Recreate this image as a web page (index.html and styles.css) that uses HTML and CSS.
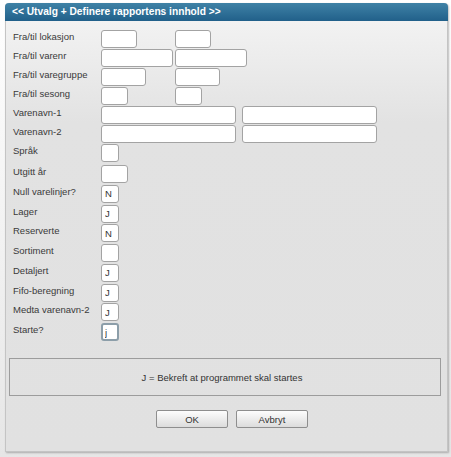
FILE: index.html
```html
<!DOCTYPE html>
<html>
<head>
<meta charset="utf-8">
<link rel="stylesheet" href="styles.css">
</head>
<body>
<div class="dialog">
  <div class="titlebar">&lt;&lt; Utvalg + Definere rapportens innhold &gt;&gt;</div>
  <div class="content">
    <div class="fields top">
      <div class="row"><span class="lbl">Fra/til lokasjon</span><div class="pair"><input class="inp w36"><input class="inp w36"></div></div>
      <div class="row"><span class="lbl">Fra/til varenr</span><div class="pair"><input class="inp w72"><input class="inp w72"></div></div>
      <div class="row"><span class="lbl">Fra/til varegruppe</span><div class="pair"><input class="inp w45"><input class="inp w45"></div></div>
      <div class="row"><span class="lbl">Fra/til sesong</span><div class="pair"><input class="inp w27"><input class="inp w27"></div></div>
      <div class="row"><span class="lbl">Varenavn-1</span><div class="pair wide"><input class="inp w135"><input class="inp w135"></div></div>
      <div class="row"><span class="lbl">Varenavn-2</span><div class="pair wide"><input class="inp w135"><input class="inp w135"></div></div>
      <div class="row"><span class="lbl">Språk</span><input class="inp w18"></div>
    </div>
    <div class="fields bottom">
      <div class="row"><span class="lbl">Utgitt år</span><input class="inp w27"></div>
      <div class="row"><span class="lbl">Null varelinjer?</span><input class="inp w18" value="N"></div>
      <div class="row"><span class="lbl">Lager</span><input class="inp w18" value="J"></div>
      <div class="row"><span class="lbl">Reserverte</span><input class="inp w18" value="N"></div>
      <div class="row"><span class="lbl">Sortiment</span><input class="inp w18"></div>
      <div class="row"><span class="lbl">Detaljert</span><input class="inp w18" value="J"></div>
      <div class="row"><span class="lbl">Fifo-beregning</span><input class="inp w18" value="J"></div>
      <div class="row"><span class="lbl">Medta varenavn-2</span><input class="inp w18" value="J"></div>
      <div class="row"><span class="lbl">Starte?</span><input class="inp w18 focus" value="j"></div>
    </div>
    <div class="message">J = Bekreft at programmet skal startes</div>
    <div class="buttons"><button class="btn">OK</button><button class="btn">Avbryt</button></div>
  </div>
</div>
</body>
</html>
```

FILE: styles.css
```css
html, body {
  margin: 0;
  padding: 0;
}
body {
  width: 451px;
  height: 457px;
  box-sizing: border-box;
  padding: 3px 3px 4px 5px;
  background: linear-gradient(#ffffff, #e6e6e6);
  font-family: "Liberation Sans", Arial, sans-serif;
  font-size: 9.5px;
  color: #333;
}
.dialog {
  width: 443px;
  height: 449px;
  box-sizing: border-box;
  display: flex;
  flex-direction: column;
  border: 1px solid #c4c4c4;
  border-top: none;
  border-radius: 4px 4px 0 0;
  box-shadow: 1px 1px 2px rgba(0,0,0,0.25);
  background: linear-gradient(#f5f5f5 0, #e2e2e2 120px, #e1e1e1 100%);
}
.titlebar {
  height: 18px;
  margin: 0 -1px;
  border-radius: 4px 4px 0 0;
  background: linear-gradient(#3f82a6, #21608a);
  color: #fff;
  font-weight: bold;
  font-size: 10.2px;
  line-height: 18px;
  padding-left: 7px;
}
.content {
  flex: 1;
  display: flex;
  flex-direction: column;
  padding: 9px 6px 0 3px;
}
.fields {
  display: flex;
  flex-direction: column;
  padding-left: 4px;
}
.fields.top {
  gap: 1px;
}
.fields.bottom {
  margin-top: 3px;
  gap: 1.75px;
}
.row {
  display: flex;
  align-items: flex-start;
  height: 18px;
}
.lbl {
  width: 88px;
  flex: none;
  line-height: 11px;
  padding-top: 1px;
  color: #3a3a3a;
}
.pair {
  display: grid;
  grid-template-columns: 74px auto;
}
.pair.wide {
  grid-template-columns: 135px 135px;
  column-gap: 6px;
}
.inp {
  box-sizing: border-box;
  height: 18px;
  margin: 0;
  padding: 0 0 0 3px;
  border: 1px solid #a3a3a3;
  border-radius: 3px;
  background: #fff;
  font-family: "Liberation Sans", Arial, sans-serif;
  font-size: 9.5px;
  color: #333;
  outline: none;
}
.inp.focus {
  border: 2px solid #8c9ea9;
  padding-left: 2px;
}
.w18 { width: 18px; }
.w27 { width: 27px; }
.w36 { width: 36px; }
.w45 { width: 45px; }
.w72 { width: 72px; }
.w135 { width: 135px; }
.message {
  margin: 17px 0 0 0;
  height: 38px;
  box-sizing: border-box;
  border: 1px solid #9c9c9c;
  display: flex;
  align-items: center;
  justify-content: center;
  padding-right: 6px;
  color: #333;
}
.buttons {
  display: flex;
  justify-content: center;
  gap: 8px;
  margin-top: 14px;
  padding-left: 14px;
}
.btn {
  box-sizing: border-box;
  width: 72px;
  height: 18px;
  margin: 0;
  padding: 0;
  border: 1px solid #8e8e8e;
  border-radius: 2px;
  background: linear-gradient(#fdfdfd, #dcdcdc);
  font-family: "Liberation Sans", Arial, sans-serif;
  font-size: 9.5px;
  color: #333;
}
```
